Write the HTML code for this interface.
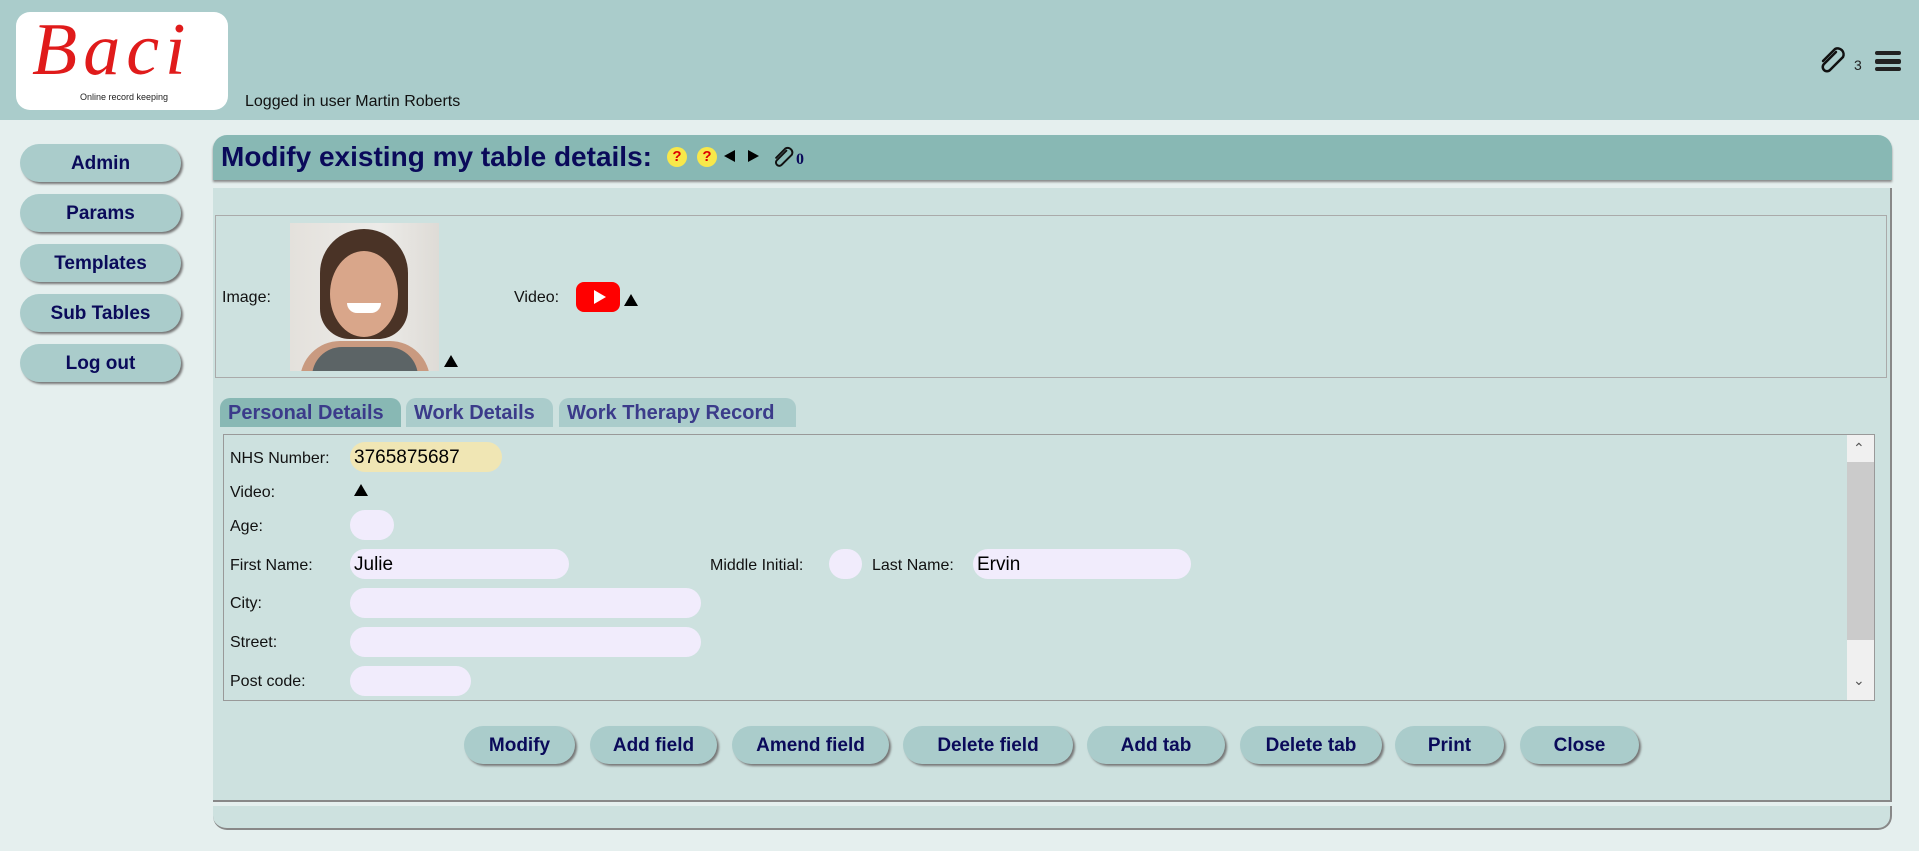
<!DOCTYPE html>
<html><head><meta charset="utf-8"><style>
*{box-sizing:border-box;margin:0;padding:0}
body{width:1919px;height:851px;overflow:hidden;background:#e5efee;font-family:"Liberation Sans",sans-serif;position:relative}
.abs{position:absolute}
#hdr{left:0;top:0;width:1919px;height:120px;background:#aacccb}
#logo{left:16px;top:12px;width:212px;height:98px;background:#fff;border-radius:14px}
.side{left:20px;width:161px;height:38px;border-radius:19px;background:#aacccb;box-shadow:2px 2px 2px #777;color:#0a0a5a;font-weight:bold;font-size:19px;text-align:center;line-height:40px}
.btn{top:726px;height:38px;border-radius:19px;background:#aacccb;box-shadow:2px 2px 2px #777;color:#0a0a5a;font-weight:bold;font-size:19px;text-align:center;line-height:40px}
.lbl{left:230px;font-size:16px;color:#111}
.inp{height:30px;border-radius:15px;background:#f1ecfc;font-size:19px;line-height:32px;padding-left:4px;color:#000}
.tab{top:398px;height:29px;border-radius:10px 10px 0 0;background:#aacccb;color:#3b3b8a;font-weight:bold;font-size:20px;line-height:30px;padding-left:8px;white-space:nowrap}
.tri{width:0;height:0;border-left:7px solid transparent;border-right:7px solid transparent;border-bottom:12px solid #000}
</style></head><body>
<div id="hdr" class="abs"></div>
<div id="logo" class="abs">
<div class="abs" style="left:16px;top:-4px;font-family:'Liberation Serif',serif;font-style:italic;font-size:74px;color:#e01b1b;letter-spacing:6px">Baci</div>
<div class="abs" style="left:64px;top:80px;font-size:9px;color:#222">Online record keeping</div>
</div>
<div class="abs" style="left:245px;top:93px;font-size:16px;color:#111">Logged in user Martin Roberts</div>
<svg class="abs" style="left:1818px;top:46px" width="30" height="28" viewBox="0 0 30 28"><path d="M18 6 L6 18 a4 4 0 0 0 6 6 L25 11 a6 6 0 0 0 -8 -8 L5 15" fill="none" stroke="#111" stroke-width="2.5" stroke-linecap="round"/></svg>
<div class="abs" style="left:1854px;top:57px;font-size:14px;color:#222">3</div>
<div class="abs" style="left:1875px;top:51px;width:26px;height:4px;background:#222;border-radius:2px"></div>
<div class="abs" style="left:1875px;top:59px;width:26px;height:5px;background:#222;border-radius:2px"></div>
<div class="abs" style="left:1875px;top:67px;width:26px;height:4px;background:#222;border-radius:2px"></div>

<div class="abs side" style="top:144px">Admin</div>
<div class="abs side" style="top:194px">Params</div>
<div class="abs side" style="top:244px">Templates</div>
<div class="abs side" style="top:294px">Sub Tables</div>
<div class="abs side" style="top:344px">Log out</div>

<div class="abs" style="left:213px;top:135px;width:1679px;height:45px;background:#88b8b4;border-radius:14px 14px 0 0;box-shadow:0 2px 2px #888"></div>
<div class="abs" style="left:221px;top:141px;font-size:28px;font-weight:bold;color:#0a0a5a;white-space:nowrap">Modify existing my table details:</div>
<div class="abs" style="left:667px;top:147px;width:20px;height:20px;border-radius:50%;background:#f8e84a;color:#d00;font-weight:bold;font-size:15px;text-align:center;line-height:20px">?</div>
<div class="abs" style="left:697px;top:147px;width:20px;height:20px;border-radius:50%;background:#f8e84a;color:#d00;font-weight:bold;font-size:15px;text-align:center;line-height:20px">?</div>
<div class="abs" style="left:724px;top:150px;width:0;height:0;border-top:6px solid transparent;border-bottom:6px solid transparent;border-right:11px solid #000"></div>
<div class="abs" style="left:748px;top:150px;width:0;height:0;border-top:6px solid transparent;border-bottom:6px solid transparent;border-left:11px solid #000"></div>
<svg class="abs" style="left:772px;top:146px" width="24" height="22" viewBox="0 0 30 28"><path d="M18 6 L6 18 a4 4 0 0 0 6 6 L25 11 a6 6 0 0 0 -8 -8 L5 15" fill="none" stroke="#111" stroke-width="2.5" stroke-linecap="round"/></svg>
<div class="abs" style="left:796px;top:151px;font-size:16px;font-weight:bold;color:#0a0a5a;font-family:'Liberation Serif',serif">0</div>

<div class="abs" style="left:213px;top:188px;width:1679px;height:614px;background:#cde1df;border-right:2px solid #888;border-bottom:2px solid #888"></div>
<div class="abs" style="left:213px;top:806px;width:1679px;height:24px;background:#cde1df;border-right:2px solid #888;border-bottom:2px solid #888;border-radius:0 0 14px 14px"></div>

<div class="abs" style="left:215px;top:215px;width:1672px;height:163px;border:1px solid #aaa"></div>
<div class="abs lbl" style="left:222px;top:289px">Image:</div>
<div class="abs" style="left:290px;top:223px;width:149px;height:148px;background:linear-gradient(90deg,#e4e1dc,#ecebe8 60%,#dedbd6);overflow:hidden">
<div class="abs" style="left:30px;top:6px;width:88px;height:110px;border-radius:44px 44px 30px 30px;background:#4a3326"></div>
<div class="abs" style="left:40px;top:28px;width:68px;height:86px;border-radius:50%;background:#d9a68a"></div>
<div class="abs" style="left:57px;top:80px;width:34px;height:10px;border-radius:0 0 17px 17px;background:#fff"></div>
<div class="abs" style="left:10px;top:118px;width:130px;height:50px;border-radius:40px 40px 0 0;background:#c99a80"></div>
<div class="abs" style="left:22px;top:124px;width:106px;height:40px;border-radius:30px 30px 0 0;background:#5c6466"></div>
</div>
<div class="abs tri" style="left:444px;top:355px"></div>
<div class="abs lbl" style="left:514px;top:289px">Video:</div>
<div class="abs" style="left:576px;top:282px;width:44px;height:30px;border-radius:8px;background:#f00"></div>
<div class="abs" style="left:594px;top:290px;width:0;height:0;border-top:7px solid transparent;border-bottom:7px solid transparent;border-left:12px solid #fff"></div>
<div class="abs tri" style="left:624px;top:294px"></div>

<div class="abs tab" style="left:220px;width:181px;background:#88b8b4">Personal Details</div>
<div class="abs tab" style="left:406px;width:147px">Work Details</div>
<div class="abs tab" style="left:559px;width:237px">Work Therapy Record</div>

<div class="abs" style="left:223px;top:434px;width:1652px;height:267px;border:1px solid #999"></div>
<div class="abs" style="left:1847px;top:435px;width:27px;height:265px;background:#f0f0f0"></div>
<div class="abs" style="left:1847px;top:462px;width:27px;height:178px;background:#cbcbcb"></div>
<div class="abs" style="left:1853px;top:440px;font-size:14px;color:#555">&#8963;</div>
<div class="abs" style="left:1853px;top:672px;font-size:14px;color:#555">&#8964;</div>

<div class="abs lbl" style="top:450px">NHS Number:</div>
<div class="abs inp" style="left:350px;top:442px;width:152px;background:#f0e6b4">3765875687</div>
<div class="abs lbl" style="top:484px">Video:</div>
<div class="abs tri" style="left:354px;top:484px"></div>
<div class="abs lbl" style="top:518px">Age:</div>
<div class="abs inp" style="left:350px;top:510px;width:44px"></div>
<div class="abs lbl" style="top:557px">First Name:</div>
<div class="abs inp" style="left:350px;top:549px;width:219px">Julie</div>
<div class="abs lbl" style="left:710px;top:557px">Middle Initial:</div>
<div class="abs inp" style="left:829px;top:549px;width:33px"></div>
<div class="abs lbl" style="left:872px;top:557px">Last Name:</div>
<div class="abs inp" style="left:973px;top:549px;width:218px">Ervin</div>
<div class="abs lbl" style="top:595px">City:</div>
<div class="abs inp" style="left:350px;top:588px;width:351px"></div>
<div class="abs lbl" style="top:634px">Street:</div>
<div class="abs inp" style="left:350px;top:627px;width:351px"></div>
<div class="abs lbl" style="top:673px">Post code:</div>
<div class="abs inp" style="left:350px;top:666px;width:121px"></div>

<div class="abs btn" style="left:464px;width:111px">Modify</div>
<div class="abs btn" style="left:590px;width:127px">Add field</div>
<div class="abs btn" style="left:732px;width:157px">Amend field</div>
<div class="abs btn" style="left:903px;width:170px">Delete field</div>
<div class="abs btn" style="left:1087px;width:138px">Add tab</div>
<div class="abs btn" style="left:1240px;width:142px">Delete tab</div>
<div class="abs btn" style="left:1395px;width:109px">Print</div>
<div class="abs btn" style="left:1520px;width:119px">Close</div>
</body></html>
